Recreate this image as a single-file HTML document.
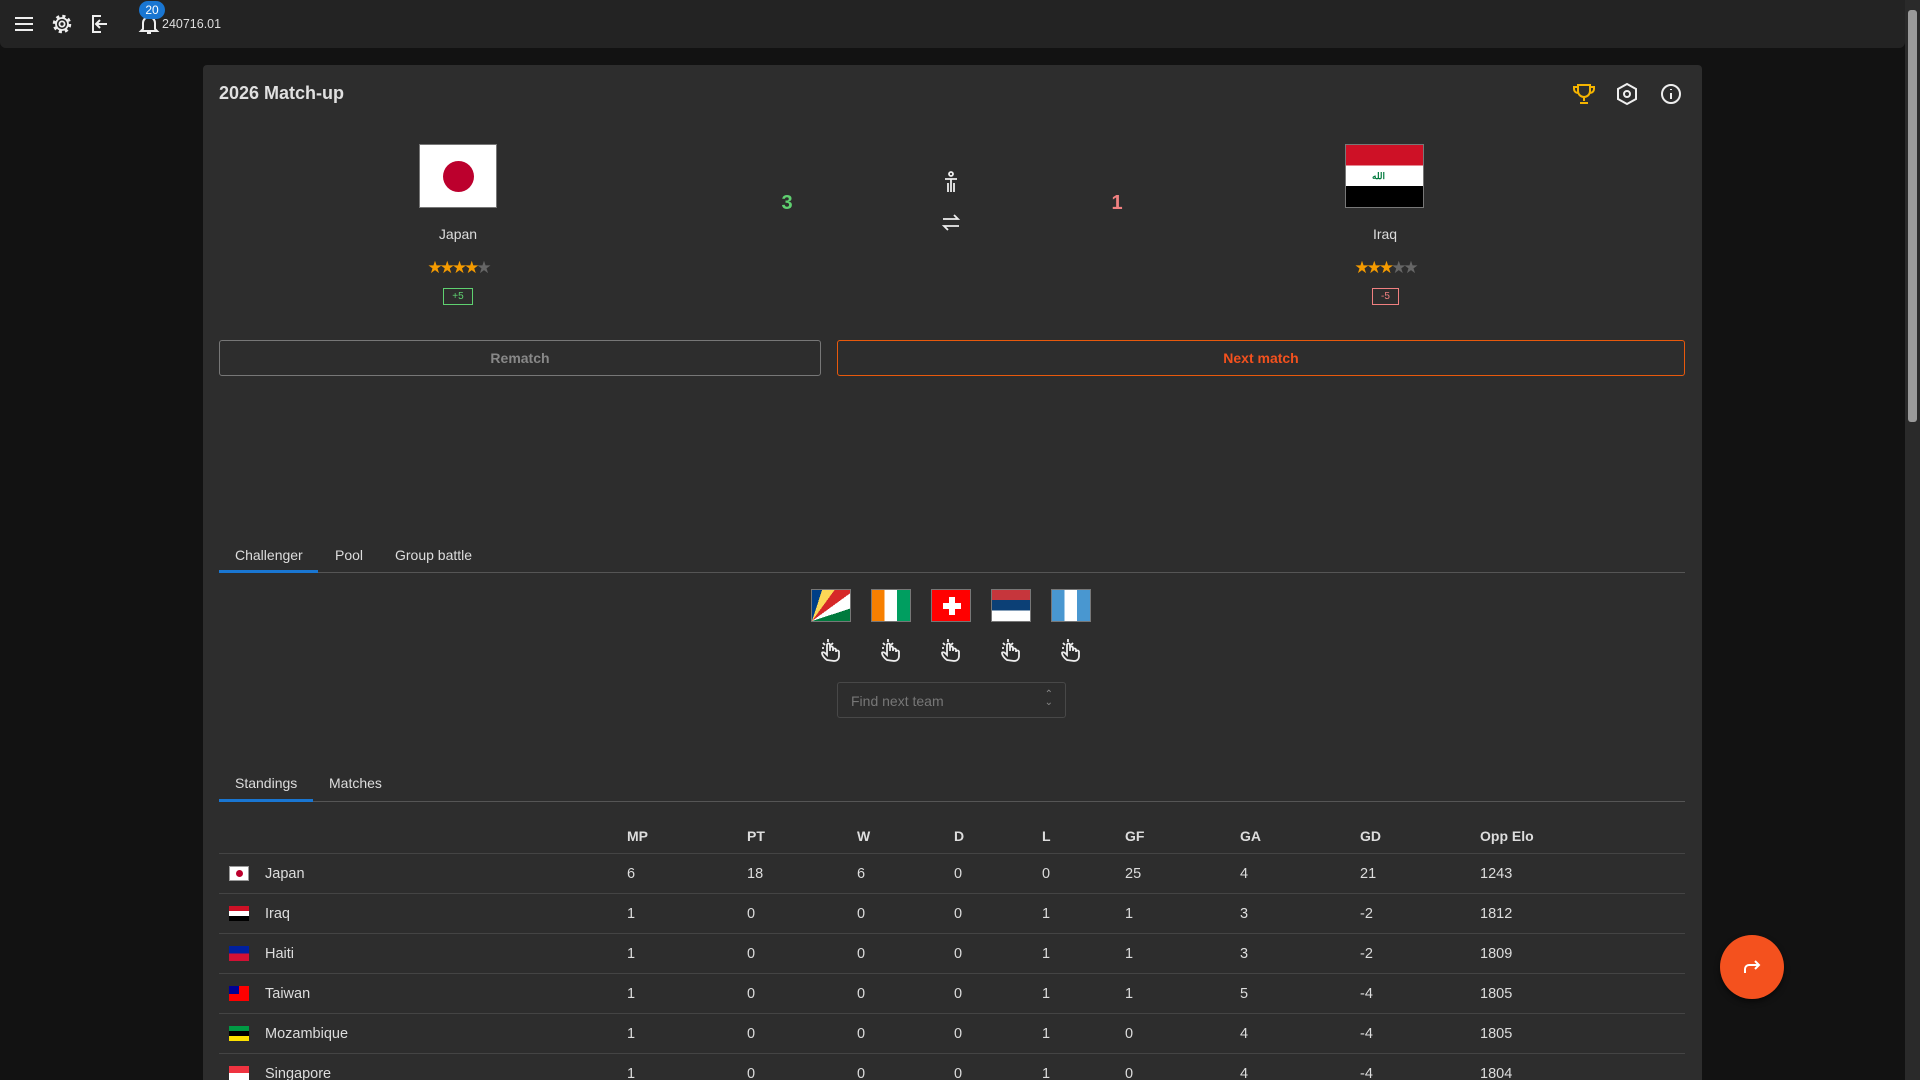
<!DOCTYPE html>
<html><head><style>
*{box-sizing:border-box;margin:0;padding:0}
html,body{width:1920px;height:1080px;overflow:hidden}
body{background:#121212;font-family:"Liberation Sans",sans-serif;color:#ddd;position:relative}
.abs{position:absolute}
.hdr{left:0;top:0;width:1905px;height:48px;background:#232323;border-radius:0 0 6px 6px}
.card{left:203px;top:65px;width:1499px;height:1015px;background:#2d2d2d;border-radius:4px 4px 0 0}
.c{transform:translateX(-50%);text-align:center;white-space:nowrap}
.btn{height:36px;border-radius:3px;font-size:14px;font-weight:bold;display:flex;align-items:center;justify-content:center}
.tab{font-size:14px;color:#ddd}
.flag{width:40px;height:33px;border:1px solid #777;overflow:hidden}
.row{left:219px;width:1466px;height:40px;border-bottom:1px solid #444;font-size:14.5px;color:#ddd}
.row span{position:absolute;top:12px}
.st{font-size:17px;letter-spacing:-3px}
</style></head><body>
<div class="abs hdr"></div>
<svg class="abs" style="left:12px;top:12px" width="150" height="24" fill="none" stroke="#eee" stroke-width="2">
<path d="M3 6h18M3 12h18M3 18h18"/>
<circle cx="50" cy="12" r="7.5" stroke-width="3.5" stroke-dasharray="3 2.9"/>
<circle cx="50" cy="12" r="6" stroke-width="1.8"/>
<circle cx="50" cy="12" r="2.6" stroke-width="1.8"/>
<path d="M89 4h-8v16h8M95 12h-11M88 8l-4 4 4 4" />
<path d="M131 17V11a6 6 0 0 1 12 0v6l2 2h-16zM135 21h4"/>
</svg>
<div class="abs" style="left:139px;top:1px;width:26px;height:18px;border-radius:9px;background:#1976d2;color:#fff;font-size:12px;text-align:center;line-height:18px">20</div>
<div class="abs" style="left:162px;top:17px;font-size:12.5px;color:#ddd">240716.01</div>
<div class="abs" style="left:1905px;top:0;width:15px;height:1080px;background:#2a2a2a"></div>
<div class="abs" style="left:1908px;top:10px;width:9px;height:412px;background:#9a9a9a;border-radius:3px"></div>

<div class="abs card"></div>
<div class="abs" style="left:219px;top:83px;font-size:18px;font-weight:bold;color:#e0e0e0">2026 Match-up</div>
<svg class="abs" style="left:1572px;top:82px" width="112" height="24" fill="none" stroke-width="2">
<path d="M6 3h12v6a6 6 0 0 1-12 0zM6 5H2v2a4 4 0 0 0 4 4M18 5h4v2a4 4 0 0 1-4 4M12 15v4M8 21h8" stroke="#f5b400"/>
<path d="M55 2l9 5v10l-9 5-9-5V7z" stroke="#eee"/><circle cx="55" cy="12" r="3" stroke="#eee"/>
<circle cx="99" cy="12" r="9" stroke="#eee"/><path d="M99 11v6M99 7v1" stroke="#eee"/>
</svg>

<div class="abs" style="left:419px;top:144px;width:78px;height:64px;background:#fff;border:1px solid #777"><div style="position:absolute;left:23px;top:16px;width:31px;height:31px;border-radius:50%;background:#bc002d"></div></div>
<div class="abs c" style="left:458px;top:226px;font-size:14px">Japan</div>
<div class="abs c st" style="left:458px;top:258px;color:#f59b00">★★★★<span style="color:#666">★</span></div>
<div class="abs" style="left:443px;top:288px;width:30px;height:17px;border:1px solid #5fd070;color:#5fd070;font-size:10px;text-align:center;line-height:15px">+5</div>

<div class="abs c" style="left:787px;top:192px;font-size:20px;font-weight:bold;color:#5fd070">3</div>
<div class="abs c" style="left:1117px;top:192px;font-size:20px;font-weight:bold;color:#f08080">1</div>
<svg class="abs" style="left:939px;top:170px" width="24" height="64" fill="none" stroke="#eee" stroke-width="1.8">
<circle cx="12" cy="4" r="2"/><path d="M6 9h12M12 9v13M9 13v9M15 13v9"/>
<path d="M4 49h15l-4-4M20 56H5l4 4"/>
</svg>

<div class="abs" style="left:1345px;top:144px;width:79px;height:64px;border:1px solid #777;background:linear-gradient(#ce1126 0 33%,#fff 33% 66%,#000 66%)"><div style="position:absolute;left:26px;top:26px;color:#007a3d;font-size:9px;font-weight:bold">الله</div></div>
<div class="abs c" style="left:1385px;top:226px;font-size:14px">Iraq</div>
<div class="abs c st" style="left:1385px;top:258px;color:#f59b00">★★★<span style="color:#666">★★</span></div>
<div class="abs" style="left:1372px;top:288px;width:27px;height:17px;border:1px solid #f08080;color:#f08080;font-size:10px;text-align:center;line-height:15px">-5</div>

<div class="abs btn" style="left:219px;top:340px;width:602px;border:1px solid #777;color:#888">Rematch</div>
<div class="abs btn" style="left:837px;top:340px;width:848px;border:1px solid #e8590c;color:#f4511e">Next match</div>

<div class="abs" style="left:219px;top:572px;width:1466px;height:1px;background:#555"></div>
<div class="abs" style="left:219px;top:570px;width:99px;height:3px;background:#1976d2"></div>
<div class="abs tab" style="left:235px;top:547px">Challenger</div>
<div class="abs tab" style="left:335px;top:547px">Pool</div>
<div class="abs tab" style="left:395px;top:547px">Group battle</div>

<div class="abs flag" style="left:811px;top:589px;background:conic-gradient(from 0deg at 0 100%,#003f87 0 18deg,#fcd856 18deg 36deg,#d62828 36deg 54deg,#fff 54deg 72deg,#007a3d 72deg 90deg)"></div>
<div class="abs flag" style="left:871px;top:589px;background:linear-gradient(90deg,#f77f00 0 33%,#fff 33% 66%,#009e60 66%)"></div>
<div class="abs flag" style="left:931px;top:589px;background:#ff0000"><div style="position:absolute;left:11px;top:13px;width:18px;height:6px;background:#fff"></div><div style="position:absolute;left:17px;top:7px;width:6px;height:18px;background:#fff"></div></div>
<div class="abs flag" style="left:991px;top:589px;background:linear-gradient(#c6363c 0 33%,#0c4076 33% 66%,#fff 66%)"></div>
<div class="abs flag" style="left:1051px;top:589px;background:linear-gradient(90deg,#4997d0 0 33%,#fff 33% 66%,#4997d0 66%)"></div>
<svg class="abs" style="left:819px;top:638px" width="264" height="26" fill="none" stroke="#eee" stroke-width="1.8">
<g id="h"><path d="M8 22c-3-2-5-5-5-7 0-1 2-1 3 0l2 2V7a1.5 1.5 0 0 1 3 0v6V10a1.5 1.5 0 0 1 3 0v3-1a1.5 1.5 0 0 1 3 0v2a1.5 1.5 0 0 1 3 0v4c0 3-2 5-5 5z"/><path d="M4 5l2 2M9 1v3M14 5l-2 2M3 10h2"/></g>
<use href="#h" x="60"/><use href="#h" x="120"/><use href="#h" x="180"/><use href="#h" x="240"/>
</svg>
<div class="abs" style="left:837px;top:682px;width:229px;height:36px;border:1px solid #484848;border-radius:3px;color:#777;font-size:14px;padding:10px 0 0 13px">Find next team<span style="position:absolute;right:12px;top:8px;font-size:10px;line-height:8px;color:#888">⌃<br>⌄</span></div>

<div class="abs" style="left:219px;top:801px;width:1466px;height:1px;background:#555"></div>
<div class="abs" style="left:219px;top:799px;width:94px;height:3px;background:#1976d2"></div>
<div class="abs tab" style="left:235px;top:775px">Standings</div>
<div class="abs tab" style="left:329px;top:775px">Matches</div>

<div class="abs row" style="top:814px;font-weight:bold;font-size:14px"><span style="left:408px;top:14px">MP</span><span style="left:528px;top:14px">PT</span><span style="left:638px;top:14px">W</span><span style="left:735px;top:14px">D</span><span style="left:823px;top:14px">L</span><span style="left:906px;top:14px">GF</span><span style="left:1021px;top:14px">GA</span><span style="left:1141px;top:14px">GD</span><span style="left:1261px;top:14px">Opp Elo</span></div>

<div class="abs row" style="top:854px"><span style="left:10px;top:12px;width:20px;height:15px;background:#fff;border:1px solid #999"><i style="position:absolute;left:6px;top:3px;width:7px;height:7px;border-radius:50%;background:#bc002d"></i></span><span style="left:46px">Japan</span><span style="left:408px">6</span><span style="left:528px">18</span><span style="left:638px">6</span><span style="left:735px">0</span><span style="left:823px">0</span><span style="left:906px">25</span><span style="left:1021px">4</span><span style="left:1141px">21</span><span style="left:1261px">1243</span></div>
<div class="abs row" style="top:894px"><span style="left:10px;top:12px;width:20px;height:15px;background:linear-gradient(#ce1126 0 33%,#fff 33% 66%,#000 66%)"></span><span style="left:46px">Iraq</span><span style="left:408px">1</span><span style="left:528px">0</span><span style="left:638px">0</span><span style="left:735px">0</span><span style="left:823px">1</span><span style="left:906px">1</span><span style="left:1021px">3</span><span style="left:1141px">-2</span><span style="left:1261px">1812</span></div>
<div class="abs row" style="top:934px"><span style="left:10px;top:12px;width:20px;height:15px;background:linear-gradient(#00209f 50%,#d21034 50%)"></span><span style="left:46px">Haiti</span><span style="left:408px">1</span><span style="left:528px">0</span><span style="left:638px">0</span><span style="left:735px">0</span><span style="left:823px">1</span><span style="left:906px">1</span><span style="left:1021px">3</span><span style="left:1141px">-2</span><span style="left:1261px">1809</span></div>
<div class="abs row" style="top:974px"><span style="left:10px;top:12px;width:20px;height:15px;background:#fe0000"><i style="position:absolute;left:0;top:0;width:10px;height:8px;background:#000095"></i></span><span style="left:46px">Taiwan</span><span style="left:408px">1</span><span style="left:528px">0</span><span style="left:638px">0</span><span style="left:735px">0</span><span style="left:823px">1</span><span style="left:906px">1</span><span style="left:1021px">5</span><span style="left:1141px">-4</span><span style="left:1261px">1805</span></div>
<div class="abs row" style="top:1014px"><span style="left:10px;top:12px;width:20px;height:15px;background:linear-gradient(#009a44 0 33%,#000 33% 66%,#fce100 66%)"></span><span style="left:46px">Mozambique</span><span style="left:408px">1</span><span style="left:528px">0</span><span style="left:638px">0</span><span style="left:735px">0</span><span style="left:823px">1</span><span style="left:906px">0</span><span style="left:1021px">4</span><span style="left:1141px">-4</span><span style="left:1261px">1805</span></div>
<div class="abs row" style="top:1054px;height:26px;border-bottom:none"><span style="left:10px;top:12px;width:20px;height:14px;background:linear-gradient(#ef3340 50%,#fff 50%)"></span><span style="left:46px">Singapore</span><span style="left:408px">1</span><span style="left:528px">0</span><span style="left:638px">0</span><span style="left:735px">0</span><span style="left:823px">1</span><span style="left:906px">0</span><span style="left:1021px">4</span><span style="left:1141px">-4</span><span style="left:1261px">1804</span></div>

<div class="abs" style="left:1720px;top:935px;width:64px;height:64px;border-radius:50%;background:#f4511e;box-shadow:0 3px 6px rgba(0,0,0,.5)"></div>
<svg class="abs" style="left:1740px;top:955px" width="24" height="24" fill="none" stroke="#fff" stroke-width="2"><path d="M5 18v-4a4 4 0 0 1 4-4h10M15 6l4 4-4 4"/></svg>
</body></html>
